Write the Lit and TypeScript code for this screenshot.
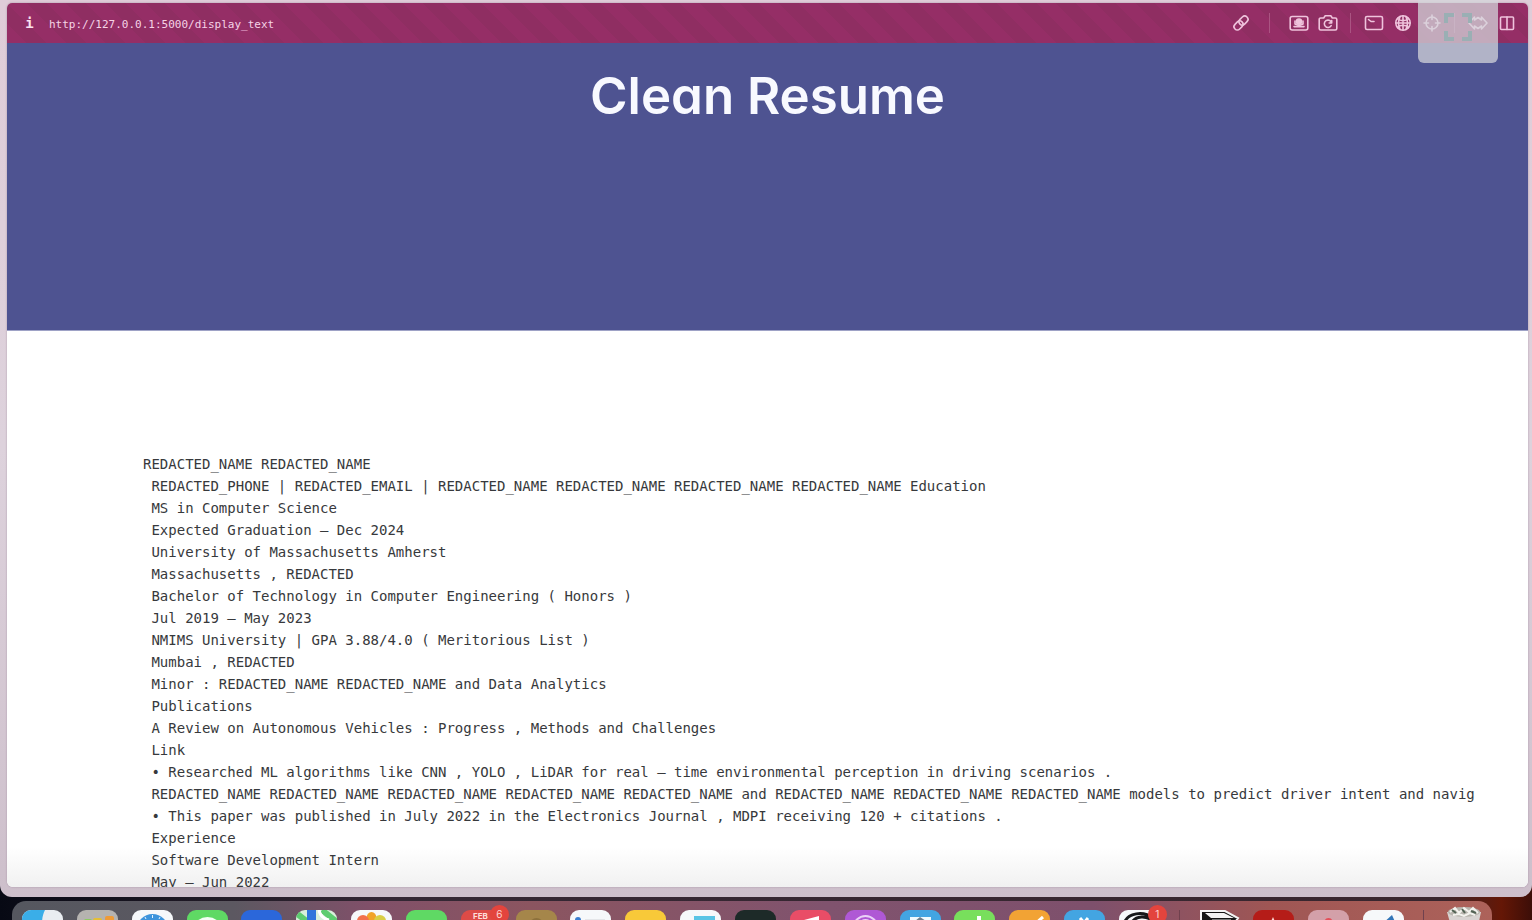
import { LitElement, html, css, svg } from "lit";
import { customElement } from "lit/decorators.js";

const resume = `REDACTED_NAME REDACTED_NAME
 REDACTED_PHONE | REDACTED_EMAIL | REDACTED_NAME REDACTED_NAME REDACTED_NAME REDACTED_NAME Education
 MS in Computer Science
 Expected Graduation – Dec 2024
 University of Massachusetts Amherst
 Massachusetts , REDACTED
 Bachelor of Technology in Computer Engineering ( Honors )
 Jul 2019 – May 2023
 NMIMS University | GPA 3.88/4.0 ( Meritorious List )
 Mumbai , REDACTED
 Minor : REDACTED_NAME REDACTED_NAME and Data Analytics
 Publications
 A Review on Autonomous Vehicles : Progress , Methods and Challenges
 Link
 • Researched ML algorithms like CNN , YOLO , LiDAR for real – time environmental perception in driving scenarios .
 REDACTED_NAME REDACTED_NAME REDACTED_NAME REDACTED_NAME REDACTED_NAME and REDACTED_NAME REDACTED_NAME REDACTED_NAME models to predict driver intent and navig
 • This paper was published in July 2022 in the Electronics Journal , MDPI receiving 120 + citations .
 Experience
 Software Development Intern
 May – Jun 2022`;

const toolbar: Array<{ label: string; art: unknown } | "wide" | "divider"> = [
  {
    label: "Copy link",
    art: svg`<g transform="rotate(-45 10 10)"><rect x="1.5" y="6.7" width="10" height="6.6" rx="3.3"/><rect x="8.5" y="6.7" width="10" height="6.6" rx="3.3"/></g>`,
  },
  "wide",
  {
    label: "Device preview",
    art: svg`<rect x="1.2" y="3.5" width="17.6" height="13.5" rx="2"/><path d="M5 13.6h10"/><circle cx="10" cy="8.6" r="2.6" fill="currentColor"/><path d="M6 8v3l3 1.2h2l3-1.2V8"/>`,
  },
  {
    label: "Capture",
    art: svg`<path d="M1.2 6.5a1.5 1.5 0 0 1 1.5-1.5h3l1.500-2.200h5.600L14.300 5h3a1.500 1.500 0 0 1 1.500 1.500v9a1.500 1.500 0 0 1-1.500 1.500H2.700a1.500 1.500 0 0 1-1.500-1.500z"/><path d="M13.500 9.500a3.700 3.700 0 1 0-.3 3.200M13.700 7.500v2.500h-2.500"/>`,
  },
  "divider",
  {
    label: "Console",
    art: svg`<rect x="1.500" y="3.500" width="17" height="13" rx="1.500"/><path d="M4.500 6.500l2.500 2M7 8.500h3"/>`,
  },
  {
    label: "Network",
    art: svg`<circle cx="10" cy="10" r="7.200"/><path d="M10 3v14M3 10h14M4.500 5.500c3 3 8 3 11 0M4.500 14.500c3-3 8-3 11 0M7 4c-2 4-2 8 0 12M13 4c2 4 2 8 0 12"/>`,
  },
  {
    label: "Inspect element",
    art: svg`<circle cx="10" cy="10" r="6"/><path d="M10 2v4.500M10 13.500V18M2 10h4.500M13.500 10H18"/>`,
  },
  "divider",
  {
    label: "Responsive width",
    art: svg`<path d="M6.500 4L1 10l5.500 6v-3l3.500 2.500 3.500-2.500v3L19 10l-5.500-6v3L10 4.500 6.500 7z"/>`,
  },
  {
    label: "Split view",
    art: svg`<rect x="3.500" y="4" width="13" height="12.500" rx="1"/><path d="M10 4v12.500"/>`,
  },
];

interface DockApp {
  name: string;
  tone: string;
  art?: unknown;
  badge?: string;
}

const dock: Array<DockApp | null> = [
  { name: "Finder", tone: "finder", art: svg`<path d="M0 0h23c-2 4-3 8-3 14H0z" fill="#3aaee8"/>` },
  { name: "Launchpad", tone: "grey", art: svg`<rect x="16" y="8" width="9" height="9" rx="2" fill="#e5bf35"/><rect x="28" y="6" width="9" height="9" rx="2" fill="#ef9b37"/><rect x="7" y="9" width="8" height="9" rx="2" fill="#8dcc61"/>` },
  { name: "Safari", tone: "white", art: svg`<circle cx="20.500" cy="20" r="16" fill="#3d94dc"/><path d="M20.500 5v3M13 7l1 2M28 7l-1 2" stroke="#e5f2ff"/>` },
  { name: "Messages", tone: "green", art: svg`<ellipse cx="20.500" cy="17" rx="13" ry="10" fill="#f4fff4"/>` },
  { name: "Mail", tone: "blue" },
  { name: "Maps", tone: "maps", art: svg`<path d="M0 3l13 10M26 0l15 12" stroke="#5dcc70" stroke-width="6"/><path d="M11 0h9v14h-9z" fill="#2f75dc"/><path d="M23 0c1 6 5 9 10 10" stroke="#fff" stroke-width="3" fill="none"/>` },
  { name: "Photos", tone: "white", art: svg`<ellipse cx="20.500" cy="8" rx="5" ry="6" fill="#f1a329"/><circle cx="12" cy="11" r="6" fill="#f2704c"/><circle cx="29" cy="11" r="6" fill="#d9ce45"/>` },
  { name: "FaceTime", tone: "green" },
  { name: "Calendar", tone: "calendar", art: svg`<text x="12" y="9" font-size="8" font-weight="700" fill="#ffdeda">FEB</text>`, badge: "6" },
  { name: "Contacts", tone: "brown", art: svg`<circle cx="20.500" cy="15" r="7" fill="#8d713c"/>` },
  { name: "Reminders", tone: "white", art: svg`<circle cx="8" cy="10" r="3" fill="#3b7ed0"/><path d="M15 10h20" stroke="#d2d5d8"/>` },
  { name: "Notes", tone: "yellow" },
  { name: "Freeform", tone: "white", art: svg`<path d="M14 6h21v12H14z" fill="#59c4e5"/>` },
  { name: "Terminal", tone: "black" },
  { name: "Music", tone: "red", art: svg`<path d="M14 10l15-4v5l-15 4z" fill="#fff"/>` },
  { name: "Podcasts", tone: "purple", art: svg`<circle cx="20.500" cy="18" r="12" fill="none" stroke="#ead0f7" stroke-width="2"/><circle cx="20.500" cy="17" r="7" fill="none" stroke="#ead0f7" stroke-width="2"/>` },
  { name: "Keynote", tone: "sky", art: svg`<path d="M10 7h21v9H10z" fill="#f1fbff"/><path d="M15 11l5-4 6 4z" fill="#717f8d"/>` },
  { name: "Numbers", tone: "lime", art: svg`<path d="M25 6v10M18 11v5" stroke="#fff" stroke-width="4"/>` },
  { name: "Pages", tone: "orange", art: svg`<path d="M34 7l-8 7" stroke="#fff" stroke-width="3"/>` },
  { name: "App Store", tone: "sky", art: svg`<path d="M16 8l7 8M24 8l-5 6" stroke="#fff" stroke-width="3"/>` },
  { name: "ChatGPT", tone: "white", art: svg`<path d="M5 14C8 2 25 1 34 8M12 14c4-9 16-9 23-2" fill="none" stroke="#17181b" stroke-width="3"/>`, badge: "1" },
  null,
  { name: "Code editor", tone: "clear", art: svg`<path d="M2 1L26 1 39 8 35 14 2 14z" fill="#151515" stroke="#f4f4f4" stroke-width="2"/><path d="M6 3h19l10 5H12z" fill="#f4f4f4"/><path d="M13 10h19" stroke="#ddd"/>` },
  { name: "Acrobat", tone: "crimson", art: svg`<path d="M20 7l4 9h-8z" fill="#ffd6d2"/>` },
  { name: "Preferences", tone: "blush", art: svg`<circle cx="20.500" cy="12" r="4" fill="#e44e58"/>` },
  { name: "Preview", tone: "white", art: svg`<path d="M19 14l10-9 4 9z" fill="#3276b8"/>` },
  null,
  { name: "Trash", tone: "clear", art: svg`<path d="M4 2h34l-3 14H8z" fill="#d8d4d2"/><ellipse cx="21" cy="2" rx="16" ry="5" fill="#b8b5ae"/><path d="M7 2l5-4 4 5 5-5 5 4 4-4 5 5M10 5l6-1 5 2 6-3 5 2" fill="none" stroke="#f3f3ee" stroke-width="2"/><path d="M9 0l4 3M19-1l3 4M28 1l5 2" stroke="#526354" stroke-width="2"/>` },
];

@customElement("app-root")
export class AppRoot extends LitElement {
  static styles = css`
    :host {
      display: flex;
      flex-direction: column;
      height: 100vh;
      overflow: hidden;
      position: relative;
      background: linear-gradient(90deg, #070914 0%, #342734 25%, #39262e 94%, #651706 98%, #3c0e08 100%);
      font-family: Inter, "Liberation Sans", sans-serif;
    }
    * {
      box-sizing: border-box;
    }
    button {
      appearance: none;
      border: 0;
      padding: 0;
      background: none;
      color: inherit;
      font: inherit;
    }
    .frame {
      flex: 1;
      min-height: 0;
      display: flex;
      padding: 3px 4px 10px 7px;
      border-radius: 0 0 12px 12px;
      background: linear-gradient(180deg, #dfccd8 0%, #ddd2dc 50%, #cdbfcb 100%);
    }
    .window {
      flex: 1;
      min-width: 0;
      display: flex;
      flex-direction: column;
      overflow: hidden;
      border-radius: 5px 5px 6px 6px;
      background: #fff;
      box-shadow: 0 0 2px #a590a3;
    }
    .bar {
      flex: none;
      display: flex;
      align-items: center;
      height: 40px;
      padding: 0 7px 0 17px;
      color: #efc3dc;
      background: repeating-linear-gradient(45deg, #952e66 0 14px, #8f2e62 14px 28px);
    }
    .info {
      width: 11px;
      margin-right: 14px;
      color: #fbe3f0;
      font: 700 14px/16px "DejaVu Sans Mono", monospace;
    }
    .url {
      flex: 1;
      min-width: 0;
      height: 18px;
      border: 0;
      padding: 2px 0 0;
      outline: 0;
      background: none;
      color: #f6d3e6;
      font: 400 11px/16px "DejaVu Sans Mono", monospace;
    }
    .tools {
      display: flex;
      align-items: center;
    }
    .tool {
      width: 29px;
      height: 24px;
      display: grid;
      place-items: center;
    }
    .tool svg {
      width: 20px;
      height: 20px;
      fill: none;
      stroke: currentColor;
      stroke-width: 1.6;
      stroke-linejoin: round;
      stroke-linecap: round;
    }
    .rule {
      width: 1px;
      height: 20px;
      margin: 0 8px;
      background: #aa5482;
    }
    .wide {
      margin: 0 14px;
    }
    .hero {
      flex: none;
      height: 288px;
      padding-top: 21px;
      background: #4e5391;
      border-bottom: 1px solid #9ea2c6;
      color: #f8f9ff;
      text-align: center;
    }
    h1 {
      margin: 0;
      font: 600 51px/64px Inter, sans-serif;
      font-feature-settings: "cv11" 1;
    }
    .page {
      flex: 1;
      min-height: 0;
      overflow: hidden;
      padding: 122px 0 0 136px;
      background: linear-gradient(0deg, #f1f1f1 0, #fff 40px);
    }
    pre {
      margin: 0;
      color: #37393c;
      font: 400 14px/22px "DejaVu Sans Mono", monospace;
    }
    .expand {
      position: absolute;
      top: 0;
      right: 34px;
      width: 80px;
      height: 63px;
      display: grid;
      place-items: center;
      padding-bottom: 9px;
      border-radius: 0 0 6px 6px;
      background: rgba(212, 213, 218, 0.74);
    }
    .expand svg {
      width: 28px;
      height: 28px;
      fill: none;
      stroke: #9aafb4;
      stroke-width: 4;
    }
    .shelf {
      flex: none;
      height: 23px;
      padding: 4px 40px 0 12px;
    }
    .dock {
      display: flex;
      justify-content: space-between;
      align-items: flex-start;
      height: 60px;
      padding: 9px 8px 0 10px;
      border-radius: 14px 14px 0 0;
      background: linear-gradient(90deg, #55575f 0%, #5c5861 15%, #805069 24%, #8b5560 35%, #80536e 55%, #7e506c 73%, #9f5654 85%, #ad625a 100%);
    }
    .app {
      position: relative;
      width: 41px;
      height: 41px;
      border-radius: 9px;
    }
    .app svg {
      display: block;
      width: 41px;
      height: 41px;
      border-radius: 9px;
    }
    .clear svg {
      overflow: visible;
    }
    .badge {
      position: absolute;
      top: -5px;
      right: -7px;
      width: 19px;
      height: 19px;
      border-radius: 50%;
      background: #e3443d;
      color: #ffd5d1;
      font-size: 10px;
      line-height: 19px;
      text-align: center;
    }
    .split {
      width: 1px;
      height: 40px;
      margin: 0 5px;
      background: #70414e;
    }
    .finder { background: #e9edf1; }
    .grey { background: #b5b3b0; }
    .white { background: #f6f8fa; }
    .green { background: #5fd964; }
    .blue { background: #2b67da; }
    .maps { background: #d8efdb; }
    .calendar { background: #dd4b47; }
    .brown { background: #a5864a; }
    .yellow { background: #f8c939; }
    .black { background: #1d2a28; }
    .red { background: #e94d67; }
    .purple { background: #af58d5; }
    .sky { background: #43a5e2; }
    .lime { background: #78df5c; }
    .orange { background: #f2a334; }
    .crimson { background: #b51c18; }
    .blush { background: #d3a0a9; }
  `;

  render() {
    return html`
      <main class="frame">
        <section class="window">
          <div class="bar">
            <button class="info" aria-label="Site information">i</button>
            <input class="url" aria-label="Address" spellcheck="false" .value=${"http://127.0.0.1:5000/display_text"} />
            <div class="tools">
              ${toolbar.map((item) =>
                typeof item === "string"
                  ? html`<span class="rule ${item}"></span>`
                  : html`<button class="tool" aria-label=${item.label}>
                      <svg viewBox="0 0 20 20">${item.art}</svg>
                    </button>`
              )}
            </div>
          </div>
          <header class="hero"><h1>Clean Resume</h1></header>
          <article class="page"><pre>${resume}</pre></article>
        </section>
      </main>
      <nav class="shelf" aria-label="Dock">
        <div class="dock">
          ${dock.map((app) =>
            app
              ? html`<button class="app ${app.tone}" aria-label=${app.name}>
                  <svg viewBox="0 0 41 41">${app.art}</svg>
                  ${app.badge ? html`<span class="badge">${app.badge}</span>` : ""}
                </button>`
              : html`<span class="split"></span>`
          )}
        </div>
      </nav>
      <button class="expand" aria-label="Expand">
        <svg viewBox="0 0 28 28">
          <path d="M2 10V2h8M18 2h8v8M26 18v8h-8M10 26H2v-8" />
        </svg>
      </button>
    `;
  }
}
